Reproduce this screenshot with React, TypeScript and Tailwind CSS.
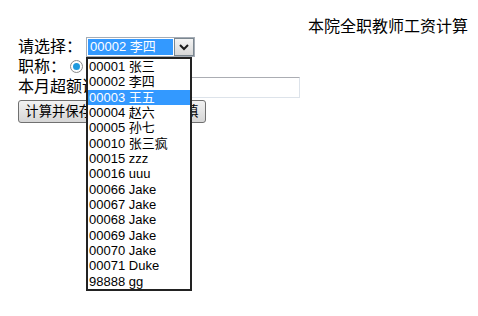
import React from 'react';

// 下拉列表里的教师
const teachers = [
  '00001 张三',
  '00002 李四',
  '00003 王五',
  '00004 赵六',
  '00005 孙七',
  '00010 张三疯',
  '00015 zzz',
  '00016 uuu',
  '00066 Jake',
  '00067 Jake',
  '00068 Jake',
  '00069 Jake',
  '00070 Jake',
  '00071 Duke',
  '98888 gg',
];

const font = { fontFamily: '"Liberation Sans", "Noto Sans CJK SC", sans-serif' };

export default function App() {
  return (
    <div className="w-[478px] h-[316px] bg-white text-black pl-[18px] pr-[10px] pt-[17px]" style={font}>
      {/* 标题 */}
      <div className="h-[20px] text-right text-[16px] leading-[20px]">本院全职教师工资计算</div>

      {/* 请选择 */}
      <div className="flex items-center h-[20px] text-[16px] leading-[20px]">
        <span className="w-[68px]">请选择：</span>
        <div className="relative flex h-[20px] w-[109px] border border-[#a5acb5] bg-white">
          <div className="mt-[1px] ml-[1px] h-[16px] w-[85px] bg-[#3399ff] text-white text-[13px] leading-[16px] pl-[2px]">
            00002 李四
          </div>
          <div className="ml-[1px] mt-[0px] h-[18px] w-[20px] border border-[#7b8790] bg-gradient-to-b from-[#f4f4f4] to-[#d8d8d8] flex items-center justify-center">
            <svg width="10" height="7" viewBox="0 0 10 7">
              <path d="M1 1 L5 5 L9 1" fill="none" stroke="#1a1a1a" strokeWidth="2" />
            </svg>
          </div>

          {/* 展开的列表 */}
          <div className="absolute left-[-1px] top-[19px] z-10 w-[106px] border-2 border-[#222] bg-white">
            {teachers.map((t, i) => (
              <div
                key={i}
                className={`h-[15.33px] text-[13px] leading-[15.33px] pl-[1px] whitespace-nowrap ${
                  i === 2 ? 'bg-[#3399ff] text-white' : 'text-black'
                }`}
              >
                {t}
              </div>
            ))}
          </div>
        </div>
      </div>

      {/* 职称 */}
      <div className="flex items-center h-[19px] text-[16px] leading-[19px]">
        <span>职称：</span>
        <span className="ml-[4px] flex h-[13px] w-[13px] items-center justify-center rounded-full border border-[#8a8a8a] bg-white">
          <span className="h-[7px] w-[7px] rounded-full bg-[#1f9ade]" />
        </span>
        <span className="ml-[4px]">教授</span>
      </div>

      {/* 超额课时 */}
      <div className="flex items-center h-[22px] text-[16px] leading-[20px]">
        <span>本月超额课时：</span>
        <div className="h-[21px] w-[170px] border border-[#dde3ea] border-t-[#abadb3] bg-white" />
      </div>

      {/* 按钮 */}
      <div className="mt-[1px]">
        <button className="h-[23px] w-[188px] rounded-[3px] border border-[#707070] bg-gradient-to-b from-[#f2f2f2] to-[#d6d6d6] text-[13.33px] leading-[21px]">
          计算并保存本月工资，或重填
        </button>
      </div>
    </div>
  );
}
